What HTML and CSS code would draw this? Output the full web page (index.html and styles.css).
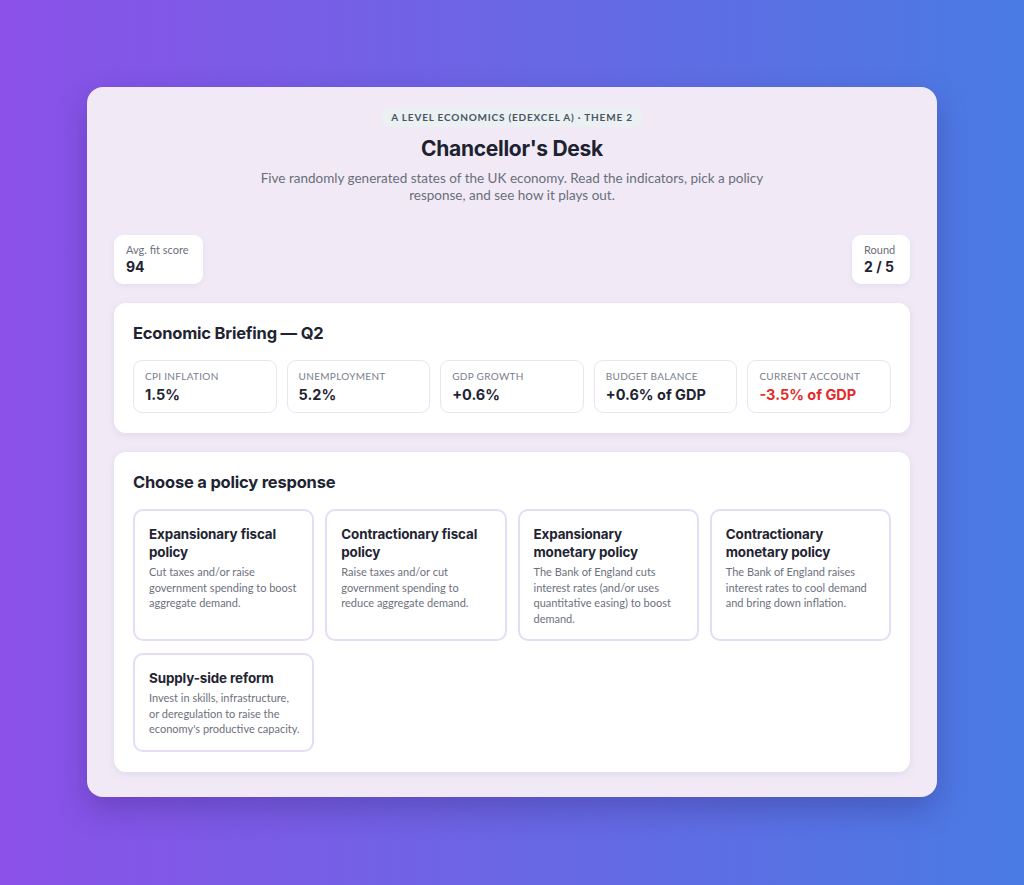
FILE: index.html
```html
<!DOCTYPE html>
<html lang="en">
<head>
<meta charset="utf-8">
<title>Chancellor's Desk</title>
<link rel="stylesheet" href="styles.css">
</head>
<body>
<main class="card">
  <header class="head">
    <span class="badge">A Level Economics (Edexcel A) · Theme 2</span>
    <h1 class="title">Chancellor's Desk</h1>
    <p class="sub">Five randomly generated states of the UK economy. Read the indicators, pick a policy response, and see how it plays out.</p>
  </header>

  <div class="stats">
    <div class="stat">
      <div class="stat-label">Avg. fit score</div>
      <div class="stat-value">94</div>
    </div>
    <div class="stat">
      <div class="stat-label">Round</div>
      <div class="stat-value">2 / 5</div>
    </div>
  </div>

  <section class="panel">
    <h2 class="panel-title">Economic Briefing — Q2</h2>
    <div class="indicators">
      <div class="ind"><div class="ind-label">CPI Inflation</div><div class="ind-value">1.5%</div></div>
      <div class="ind"><div class="ind-label">Unemployment</div><div class="ind-value">5.2%</div></div>
      <div class="ind"><div class="ind-label">GDP Growth</div><div class="ind-value">+0.6%</div></div>
      <div class="ind"><div class="ind-label">Budget Balance</div><div class="ind-value">+0.6% of GDP</div></div>
      <div class="ind"><div class="ind-label">Current Account</div><div class="ind-value neg">-3.5% of GDP</div></div>
    </div>
  </section>

  <section class="panel">
    <h2 class="panel-title">Choose a policy response</h2>
    <div class="policies">
      <div class="policy">
        <h3 class="policy-title">Expansionary fiscal policy</h3>
        <p class="policy-desc">Cut taxes and/or raise government spending to boost aggregate demand.</p>
      </div>
      <div class="policy">
        <h3 class="policy-title">Contractionary fiscal policy</h3>
        <p class="policy-desc">Raise taxes and/or cut government spending to reduce aggregate demand.</p>
      </div>
      <div class="policy">
        <h3 class="policy-title">Expansionary monetary policy</h3>
        <p class="policy-desc">The Bank of England cuts interest rates (and/or uses quantitative easing) to boost demand.</p>
      </div>
      <div class="policy">
        <h3 class="policy-title">Contractionary monetary policy</h3>
        <p class="policy-desc">The Bank of England raises interest rates to cool demand and bring down inflation.</p>
      </div>
      <div class="policy">
        <h3 class="policy-title">Supply-side reform</h3>
        <p class="policy-desc">Invest in skills, infrastructure, or deregulation to raise the economy's productive capacity.</p>
      </div>
    </div>
  </section>
</main>
</body>
</html>
```

FILE: styles.css
```css
* { box-sizing: border-box; }
html, body { margin: 0; padding: 0; }
body {
  min-height: 885px;
  background: linear-gradient(90deg, #8b51e8 0%, #6a66e4 50%, #4a7be4 100%);
  font-family: "Lato", "Noto Sans", sans-serif;
  color: #1f2432;
  padding: 87px 87px 88px;
}
.card {
  width: 850px;
  height: 710px;
  background: #f1eaf6;
  border-radius: 16px;
  box-shadow: 0 12px 30px rgba(40, 20, 90, 0.28);
  padding: 20px 27px 27px;
  display: flex;
  flex-direction: column;
}
.head {
  display: flex;
  flex-direction: column;
  align-items: center;
  text-align: center;
}
.badge {
  display: inline-block;
  background: #ebf0f3;
  color: #4a5462;
  font-family: "Lato", sans-serif;
  font-weight: 700;
  font-size: 10px;
  letter-spacing: 0.8px;
  text-transform: uppercase;
  padding: 4px 10px;
  border-radius: 10px;
  line-height: 12px;
}
.title {
  font-family: "Inter", "Roboto", sans-serif;
  font-weight: 700;
  font-size: 21px;
  letter-spacing: -0.3px;
  margin: 9px 0 8px;
  line-height: 26px;
  color: #1e2230;
}
.sub {
  margin: 0;
  width: 520px;
  font-size: 13.5px;
  line-height: 17px;
  color: #6a6e7a;
}
.stats {
  margin-top: 31px;
  display: flex;
  justify-content: space-between;
}
.stat {
  background: #ffffff;
  border-radius: 9px;
  padding: 8px 12px 8px;
  min-width: 58px;
  box-shadow: 0 2px 6px rgba(80, 60, 140, 0.08);
  height: 49px;
}
.stat:first-child { padding-right: 15px; }
.stat-label {
  font-size: 11px;
  line-height: 14px;
  color: #6b6f7b;
}
.stat-value {
  font-family: "Inter", sans-serif;
  font-weight: 700;
  font-size: 14px;
  line-height: 19px;
  color: #1f2432;
}
.panel {
  background: #ffffff;
  border-radius: 12px;
  box-shadow: 0 2px 8px rgba(80, 60, 140, 0.10);
  padding: 20px 19px 20px;
  margin-top: 19px;
}
.panel-title {
  margin: 0;
  font-family: "Inter", sans-serif;
  font-weight: 700;
  font-size: 16.5px;
  letter-spacing: -0.2px;
  line-height: 21px;
  color: #1f2432;
}
.indicators {
  margin-top: 16px;
  display: grid;
  grid-template-columns: repeat(5, 1fr);
  gap: 10px;
}
.ind {
  border: 1px solid #e8e4f2;
  border-radius: 9px;
  height: 53px;
  padding: 9px 11px;
}
.ind-label {
  font-size: 10px;
  line-height: 13px;
  letter-spacing: 0.3px;
  text-transform: uppercase;
  color: #7a7e89;
  margin-bottom: 2px;
}
.ind-value {
  font-family: "Inter", sans-serif;
  font-weight: 700;
  font-size: 14.5px;
  line-height: 20px;
  color: #1f2432;
}
.ind-value.neg { color: #e42a2a; }
.policies {
  margin-top: 16px;
  display: grid;
  grid-template-columns: repeat(4, 1fr);
  column-gap: 11px;
  row-gap: 12px;
}
.policy {
  border: 2px solid #e6ddf5;
  border-radius: 10px;
  padding: 14px 11.5px 13px 14px;
  min-height: 98px;
}
.policy-title {
  margin: 0;
  font-family: "Inter", sans-serif;
  font-weight: 700;
  font-size: 13.4px;
  line-height: 18px;
  letter-spacing: -0.1px;
  color: #1f2432;
}
.policy-desc {
  margin: 3px 0 0;
  font-size: 11px;
  line-height: 15.5px;
  color: #6d717c;
}
```
